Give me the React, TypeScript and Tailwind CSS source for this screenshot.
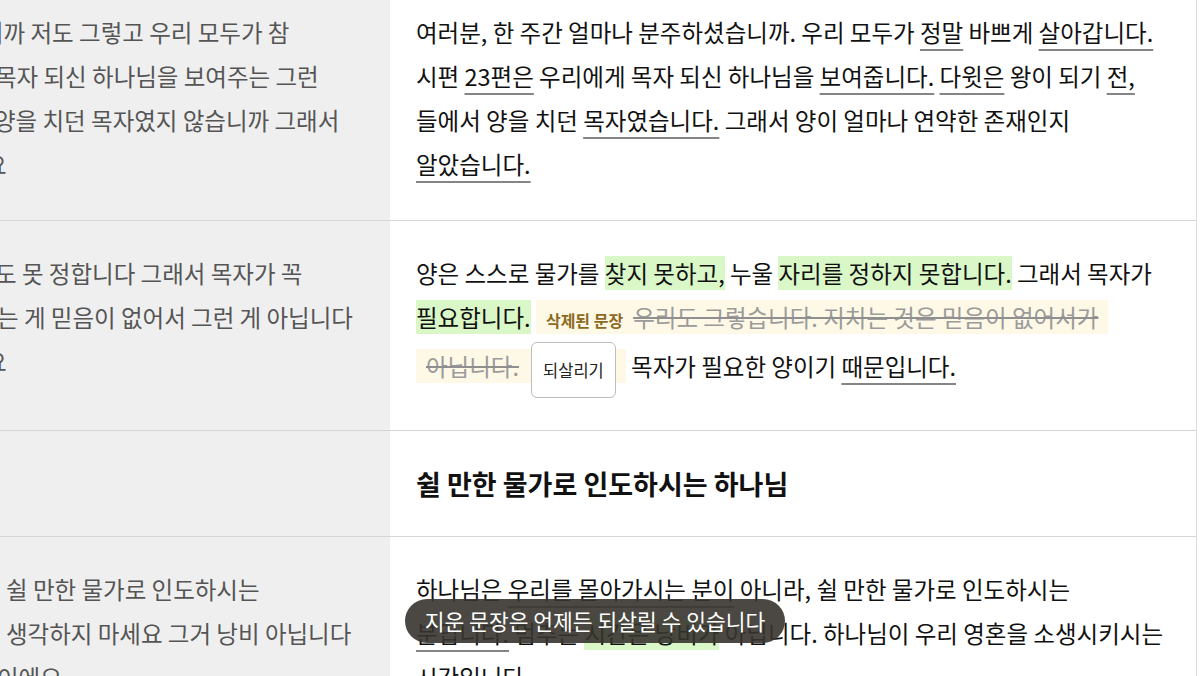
import type { ReactNode } from 'react';

const U = ({ children }: { children: ReactNode }) => (
  <span className="underline decoration-2 decoration-[#858585] underline-offset-[7px]">{children}</span>
);

const G = ({ children }: { children: ReactNode }) => <span className="bg-[#daf7c8]">{children}</span>;

function Side({ lines }: { lines: { text: string; shift: string }[] }) {
  return (
    <div className="overflow-hidden bg-[#efefef] text-[23.5px] leading-[44px] text-[#555555] whitespace-nowrap">
      {lines.map((l, i) => (
        <div key={i} className={l.shift}>
          {l.text}
        </div>
      ))}
    </div>
  );
}

export default function App() {
  return (
    <div className="relative h-[676px] w-[1200px] overflow-hidden bg-white font-['Noto_Sans_CJK_KR',sans-serif]">
      <div className="w-[1197px] border-r border-[#dcdcdc]">
        {/* row 1 */}
        <div className="grid grid-cols-[390px_1fr] border-b border-[#d6d6d6]">
          <div className="bg-[#efefef] pt-[10px] pb-[34px]">
            <Side
              lines={[
                { text: '니까 저도 그렇고 우리 모두가 참', shift: '-ml-[18px]' },
                { text: '목자 되신 하나님을 보여주는 그런', shift: '-ml-[5px]' },
                { text: '양을 치던 목자였지 않습니까 그래서', shift: '-ml-[6px]' },
                { text: '요', shift: '-ml-[15px]' },
              ]}
            />
          </div>
          <div className="pt-[10px] pb-[34px] pl-[26px] text-[23.5px] leading-[44px] text-[#111111] whitespace-nowrap">
            여러분, 한 주간 얼마나 분주하셨습니까. 우리 모두가 <U>정말</U> 바쁘게 <U>살아갑니다.</U>
            <br />
            시편 <U>23편은</U> 우리에게 목자 되신 하나님을 <U>보여줍니다.</U> <U>다윗은</U> 왕이 되기 <U>전,</U>
            <br />
            들에서 양을 치던 <U>목자였습니다.</U> 그래서 양이 얼마나 연약한 존재인지
            <br />
            <U>알았습니다.</U>
          </div>
        </div>

        {/* row 2 */}
        <div className="grid grid-cols-[390px_1fr] border-b border-[#d6d6d6]">
          <div className="bg-[#efefef] pt-[30px] pb-[32px]">
            <Side
              lines={[
                { text: '도 못 정합니다 그래서 목자가 꼭', shift: '-ml-[5px]' },
                { text: '는 게 믿음이 없어서 그런 게 아닙니다', shift: '-ml-[3px]' },
                { text: '요', shift: '-ml-[15px]' },
              ]}
            />
          </div>
          <div className="pt-[30px] pb-[32px] pl-[26px] text-[23.5px] leading-[44px] text-[#111111] whitespace-nowrap">
            양은 스스로 물가를 <G>찾지 못하고,</G> 누울 <G>자리를 정하지 못합니다.</G> 그래서 목자가
            <br />
            <G>필요합니다.</G>{' '}
            <span className="bg-[#fdf9e6] px-[10px] box-decoration-clone">
              <span className="mr-[10px] text-[16px] font-bold text-[#8d6a22]">삭제된 문장</span>
              <span className="text-[#9b9b9b] line-through decoration-[#8f8f8f] decoration-2">
                우리도 그렇습니다. 지치는 것은 믿음이 없어서가
                <br />
                아닙니다.
              </span>
              <button className="ml-[12px] inline-flex h-[56px] items-center rounded-[6px] border border-[#bdbdbd] bg-white px-[11px] align-middle text-[16.5px] text-[#222222]">
                되살리기
              </button>
            </span>{' '}
            목자가 필요한 양이기 <U>때문입니다.</U>
          </div>
        </div>

        {/* row 3 */}
        <div className="grid grid-cols-[390px_1fr] border-b border-[#d6d6d6]">
          <div className="bg-[#efefef]" />
          <div className="py-[30px] pl-[26px] text-[27px] font-bold leading-[45px] text-[#111111]">
            쉴 만한 물가로 인도하시는 하나님
          </div>
        </div>

        {/* row 4 */}
        <div className="grid grid-cols-[390px_1fr]">
          <div className="bg-[#efefef] py-[30px]">
            <Side
              lines={[
                { text: '쉴 만한 물가로 인도하시는', shift: 'pl-[6px]' },
                { text: '생각하지 마세요 그거 낭비 아닙니다', shift: 'pl-[6px]' },
                { text: '이에요', shift: '-ml-[3px]' },
              ]}
            />
          </div>
          <div className="py-[30px] pl-[26px] text-[23.5px] leading-[44px] text-[#111111] whitespace-nowrap">
            하나님은 <U>우리를 몰아가시는 분이</U> 아니라, 쉴 만한 물가로 인도하시는
            <br />
            <U>분입니다.</U> 멈추는 <G>시간은 낭비가</G> 아닙니다. 하나님이 우리 영혼을 소생시키시는
            <br />
            시간입니다.
          </div>
        </div>
      </div>

      <div className="absolute left-[405px] top-[599px] flex h-[44px] w-[380px] items-center justify-center rounded-full bg-[#37342f]/90 text-[21.5px] text-white">
        지운 문장은 언제든 되살릴 수 있습니다
      </div>
    </div>
  );
}
